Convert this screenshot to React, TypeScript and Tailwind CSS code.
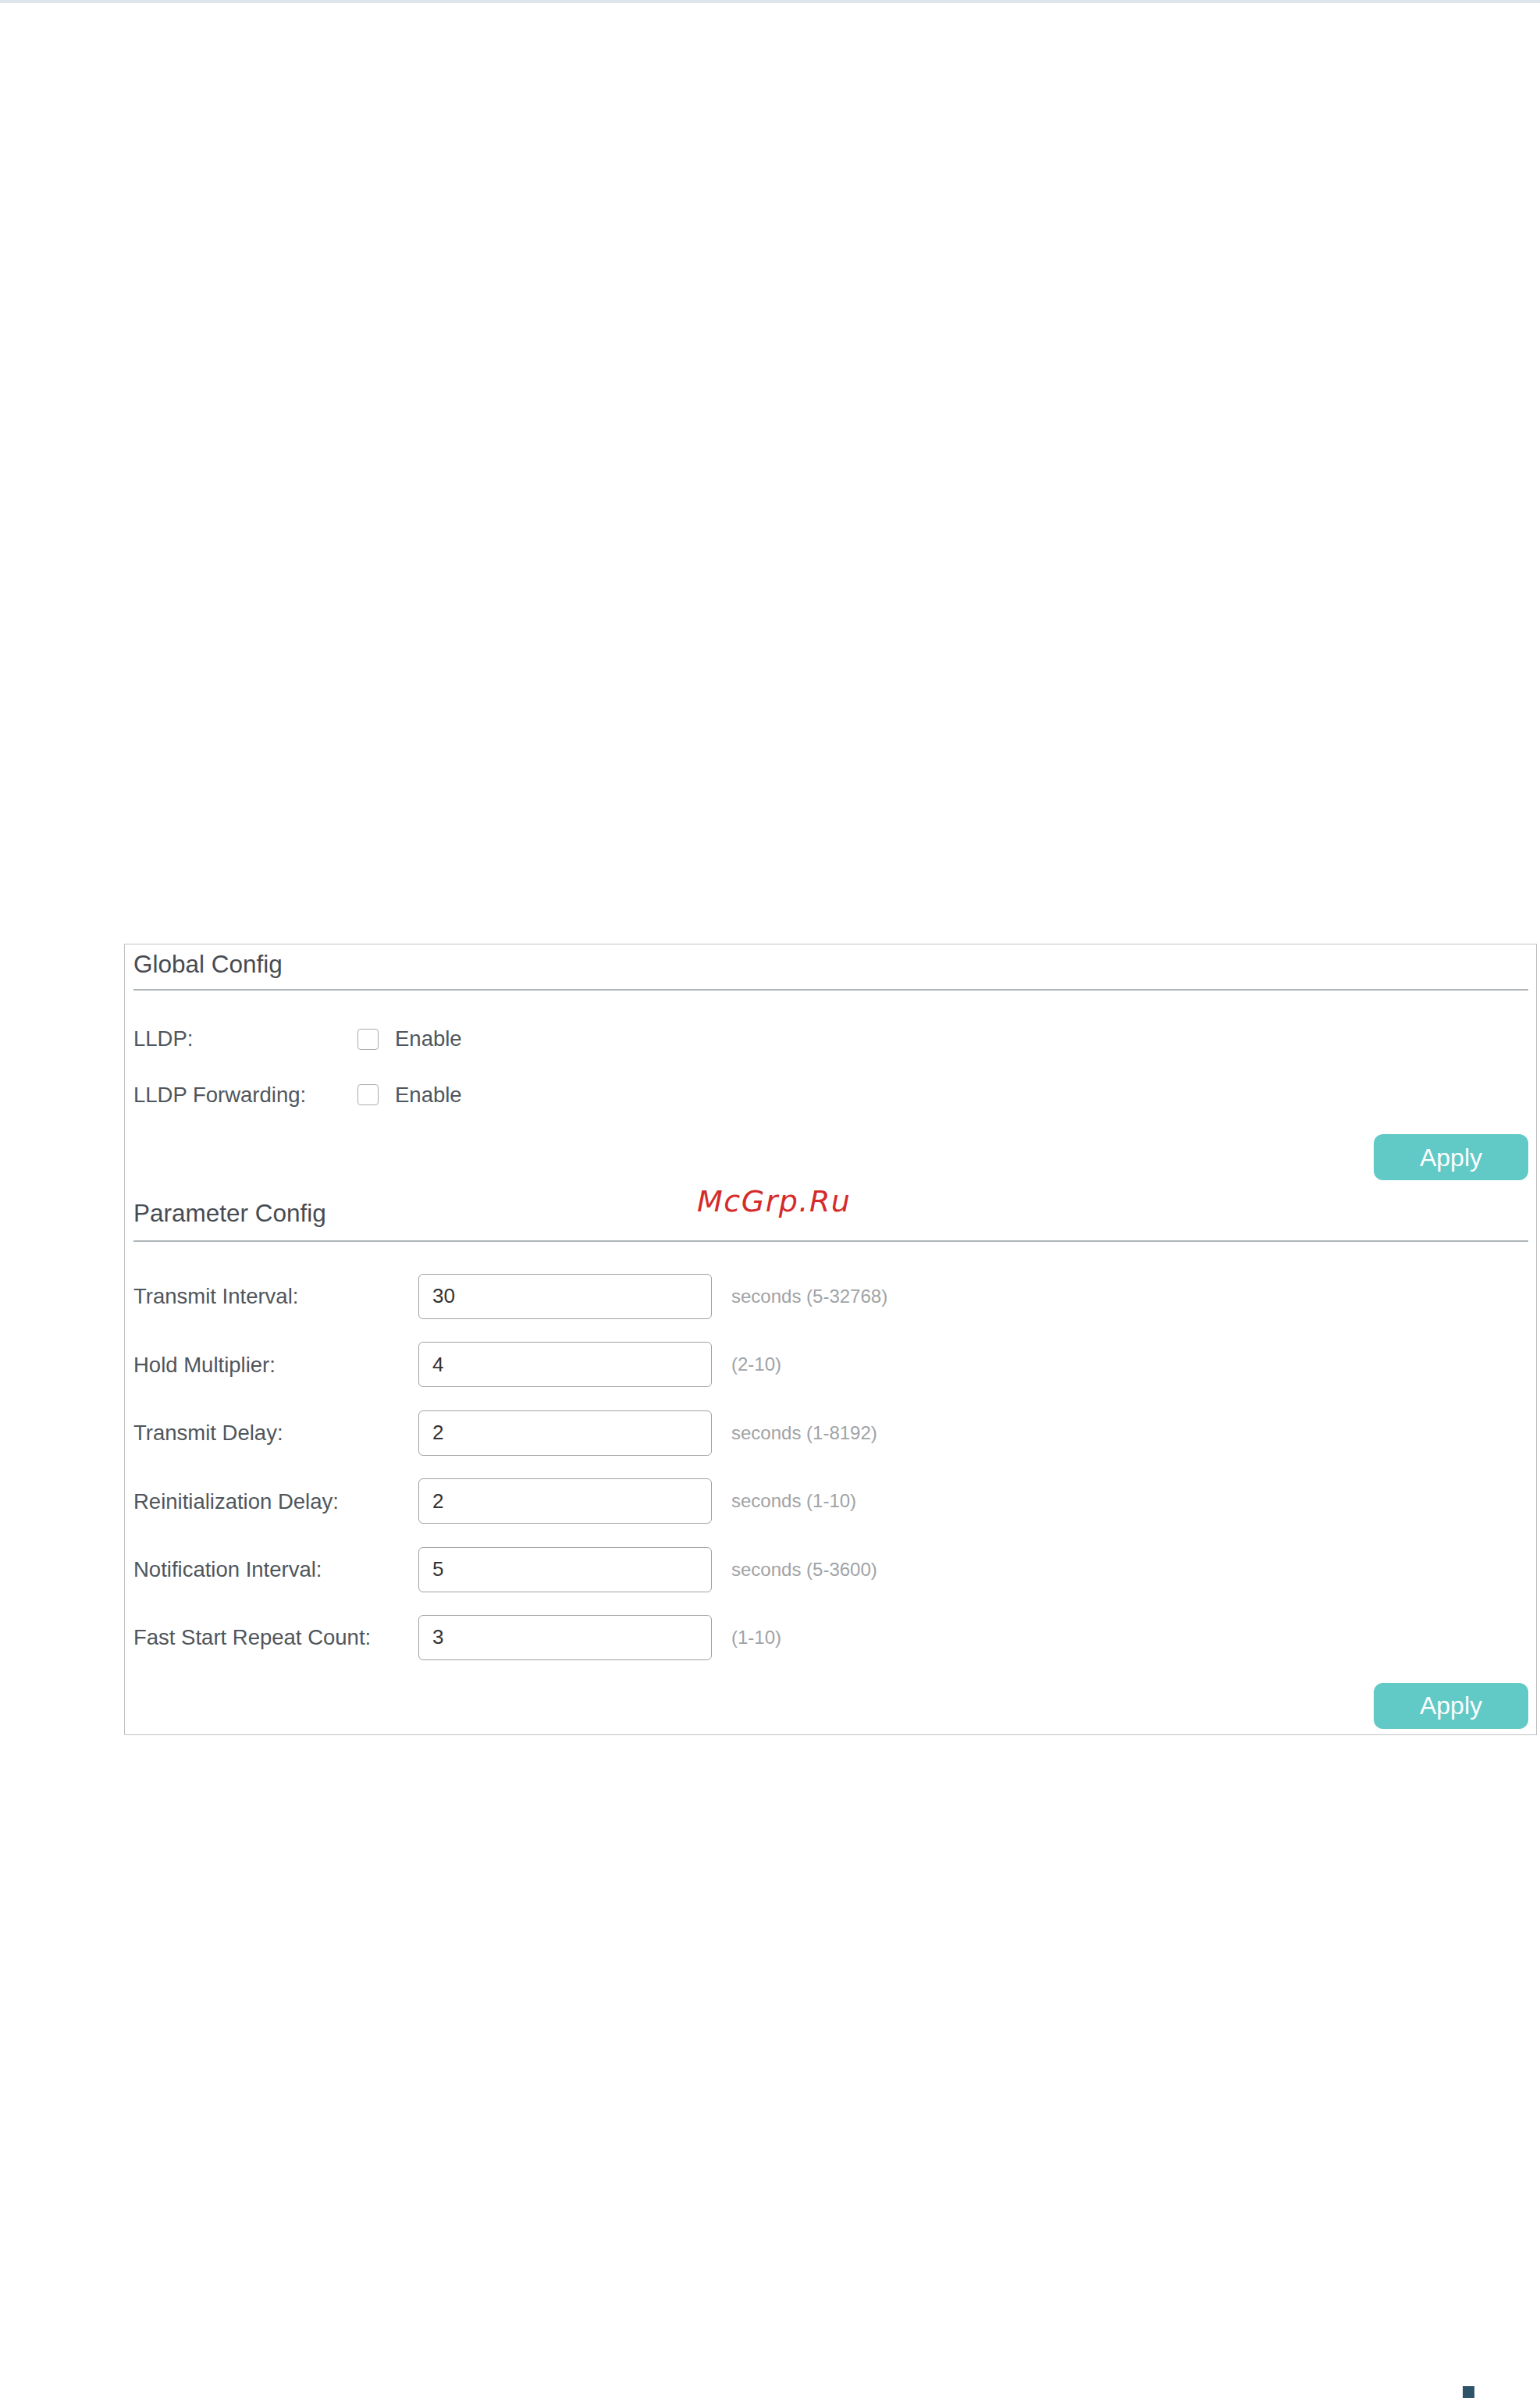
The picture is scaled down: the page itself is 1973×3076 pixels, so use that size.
import React from "react";

type Param = {
  label: string;
  value: string;
  hint: string;
};

const PARAMS: Param[] = [
  { label: "Transmit Interval:", value: "30", hint: "seconds (5-32768)" },
  { label: "Hold Multiplier:", value: "4", hint: "(2-10)" },
  { label: "Transmit Delay:", value: "2", hint: "seconds (1-8192)" },
  { label: "Reinitialization Delay:", value: "2", hint: "seconds (1-10)" },
  { label: "Notification Interval:", value: "5", hint: "seconds (5-3600)" },
  { label: "Fast Start Repeat Count:", value: "3", hint: "(1-10)" },
];

function SectionTitle({ title, top, gap }: { title: string; top: string; gap: string }) {
  return (
    <div className={top}>
      <div className="text-[31.5px] leading-[36px] text-[#474c52]">{title}</div>
      <div className={`${gap} h-[2px] bg-[#aeb5b9]`} />
    </div>
  );
}

function ApplyButton({ top }: { top: string }) {
  return (
    <div className={`flex justify-end ${top}`}>
      <button className="w-[198px] h-[59px] rounded-[12px] bg-[#61c9c6] text-white text-[32px] leading-none">
        Apply
      </button>
    </div>
  );
}

function EnableRow({ label }: { label: string }) {
  return (
    <div className="flex items-center h-[40px]">
      <span className="w-[287px] text-[27.5px] text-[#50565c]">{label}</span>
      <span className="w-[27px] h-[27px] rounded-[4px] border-[1.5px] border-[#a9acaf] bg-white" />
      <span className="ml-[21px] text-[27.5px] text-[#50565c]">Enable</span>
    </div>
  );
}

export default function App() {
  return (
    <div
      className="relative w-full h-[3076px] bg-white overflow-hidden"
      style={{ fontFamily: '"Liberation Sans", Arial, sans-serif' }}
    >
      <div className="h-[4px] bg-[#dce6ec]" />

      {/* Panneau principal */}
      <div className="ml-[159px] mt-[1205px] w-[1810px] border border-[#c2c2c2] pl-[11px] pr-[10px] pb-[7px]">
        <SectionTitle title="Global Config" top="pt-[7px]" gap="mt-[14px]" />

        <div className="mt-[42px] flex flex-col gap-[31.5px]">
          <EnableRow label="LLDP:" />
          <EnableRow label="LLDP Forwarding:" />
        </div>

        <ApplyButton top="mt-[30.5px]" />

        <SectionTitle title="Parameter Config" top="mt-[24.4px]" gap="mt-[16.6px]" />

        <div className="mt-[41px] flex flex-col gap-[29.4px]">
          {PARAMS.map((p) => (
            <div key={p.label} className="flex items-center h-[58px]">
              <span className="w-[365px] text-[27.5px] text-[#50565c]">{p.label}</span>
              <div className="w-[376px] h-[58px] rounded-[6px] border-[1.5px] border-[#9ea2a5] flex items-center pl-[17px] text-[26px] text-[#333]">
                {p.value}
              </div>
              <span className="ml-[25px] text-[24px] text-[#a0a3a6]">{p.hint}</span>
            </div>
          ))}
        </div>

        <ApplyButton top="mt-[29px]" />
      </div>

      {/* Filigrane */}
      <div
        className="absolute left-[893px] top-[1520px] text-[38px] leading-[38px] italic tracking-[1.5px] text-[#d42b2b]"
        style={{ fontFamily: '"DejaVu Sans", sans-serif' }}
      >
        McGrp.Ru
      </div>

      <div className="absolute left-[1874px] top-[3057px] w-[15px] h-[15px] bg-[#2d5468]" />
    </div>
  );
}
